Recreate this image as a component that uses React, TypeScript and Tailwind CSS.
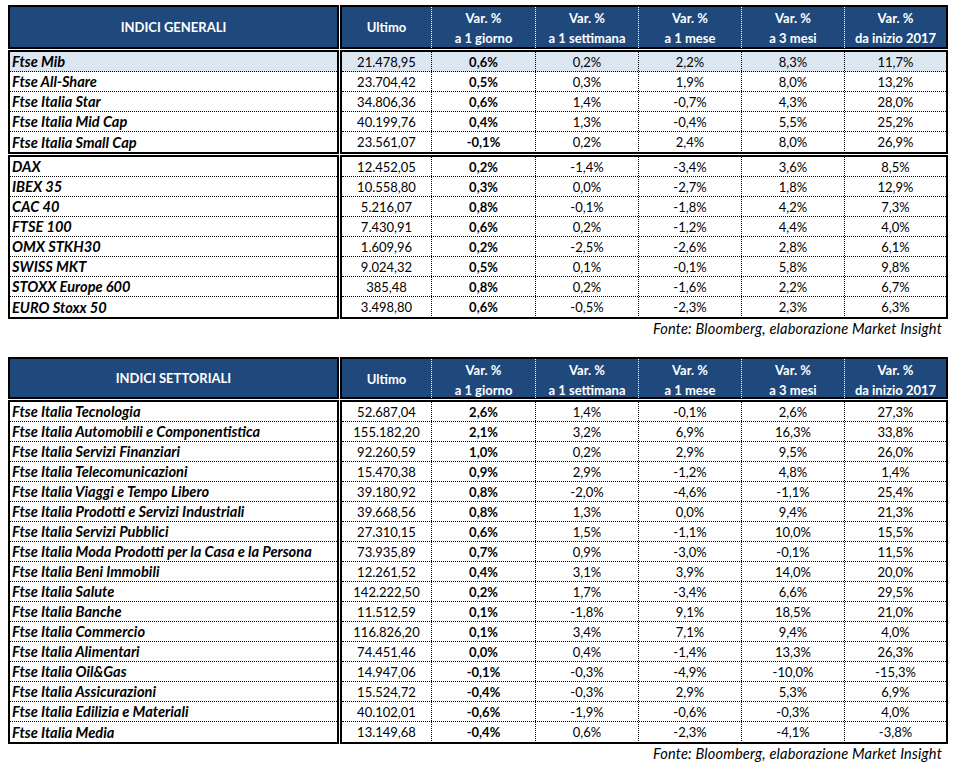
import React from "react";

type Row = [string, string, string, string, string, string, string];

const generali1: Row[] = [
  ["Ftse Mib", "21.478,95", "0,6%", "0,2%", "2,2%", "8,3%", "11,7%"],
  ["Ftse All-Share", "23.704,42", "0,5%", "0,3%", "1,9%", "8,0%", "13,2%"],
  ["Ftse Italia Star", "34.806,36", "0,6%", "1,4%", "-0,7%", "4,3%", "28,0%"],
  ["Ftse Italia Mid Cap", "40.199,76", "0,4%", "1,3%", "-0,4%", "5,5%", "25,2%"],
  ["Ftse Italia Small Cap", "23.561,07", "-0,1%", "0,2%", "2,4%", "8,0%", "26,9%"],
];

const generali2: Row[] = [
  ["DAX", "12.452,05", "0,2%", "-1,4%", "-3,4%", "3,6%", "8,5%"],
  ["IBEX 35", "10.558,80", "0,3%", "0,0%", "-2,7%", "1,8%", "12,9%"],
  ["CAC 40", "5.216,07", "0,8%", "-0,1%", "-1,8%", "4,2%", "7,3%"],
  ["FTSE 100", "7.430,91", "0,6%", "0,2%", "-1,2%", "4,4%", "4,0%"],
  ["OMX STKH30", "1.609,96", "0,2%", "-2,5%", "-2,6%", "2,8%", "6,1%"],
  ["SWISS MKT", "9.024,32", "0,5%", "0,1%", "-0,1%", "5,8%", "9,8%"],
  ["STOXX Europe 600", "385,48", "0,8%", "0,2%", "-1,6%", "2,2%", "6,7%"],
  ["EURO Stoxx 50", "3.498,80", "0,6%", "-0,5%", "-2,3%", "2,3%", "6,3%"],
];

const settoriali: Row[] = [
  ["Ftse Italia Tecnologia", "52.687,04", "2,6%", "1,4%", "-0,1%", "2,6%", "27,3%"],
  ["Ftse Italia Automobili e Componentistica", "155.182,20", "2,1%", "3,2%", "6,9%", "16,3%", "33,8%"],
  ["Ftse Italia Servizi Finanziari", "92.260,59", "1,0%", "0,2%", "2,9%", "9,5%", "26,0%"],
  ["Ftse Italia Telecomunicazioni", "15.470,38", "0,9%", "2,9%", "-1,2%", "4,8%", "1,4%"],
  ["Ftse Italia Viaggi e Tempo Libero", "39.180,92", "0,8%", "-2,0%", "-4,6%", "-1,1%", "25,4%"],
  ["Ftse Italia Prodotti e Servizi Industriali", "39.668,56", "0,8%", "1,3%", "0,0%", "9,4%", "21,3%"],
  ["Ftse Italia Servizi Pubblici", "27.310,15", "0,6%", "1,5%", "-1,1%", "10,0%", "15,5%"],
  ["Ftse Italia Moda Prodotti per la Casa e la Persona", "73.935,89", "0,7%", "0,9%", "-3,0%", "-0,1%", "11,5%"],
  ["Ftse Italia Beni Immobili", "12.261,52", "0,4%", "3,1%", "3,9%", "14,0%", "20,0%"],
  ["Ftse Italia Salute", "142.222,50", "0,2%", "1,7%", "-3,4%", "6,6%", "29,5%"],
  ["Ftse Italia Banche", "11.512,59", "0,1%", "-1,8%", "9,1%", "18,5%", "21,0%"],
  ["Ftse Italia Commercio", "116.826,20", "0,1%", "3,4%", "7,1%", "9,4%", "4,0%"],
  ["Ftse Italia Alimentari", "74.451,46", "0,0%", "0,4%", "-1,4%", "13,3%", "26,3%"],
  ["Ftse Italia Oil&Gas", "14.947,06", "-0,1%", "-0,3%", "-4,9%", "-10,0%", "-15,3%"],
  ["Ftse Italia Assicurazioni", "15.524,72", "-0,4%", "-0,3%", "2,9%", "5,3%", "6,9%"],
  ["Ftse Italia Edilizia e Materiali", "40.102,01", "-0,6%", "-1,9%", "-0,6%", "-0,3%", "4,0%"],
  ["Ftse Italia Media", "13.149,68", "-0,4%", "0,6%", "-2,3%", "-4,1%", "-3,8%"],
];

const GRID = "grid grid-cols-[90px_104px_103px_103px_103px_1fr]";

function Header({ title, tall }: { title: string; tall?: boolean }) {
  const cols: [string, string][] = [
    ["Var. %", "a 1 giorno"],
    ["Var. %", "a 1 settimana"],
    ["Var. %", "a 1 mese"],
    ["Var. %", "a 3 mesi"],
    ["Var. %", "da inizio 2017"],
  ];
  const h = tall ? "h-[44px]" : "h-[42px]";
  return (
    <div className="flex gap-[1px]">
      <div className={`w-[331px] ${h} border-2 border-black bg-[#1f497d] text-white font-bold flex items-center justify-center pt-[1px]`}>
        {title}
      </div>
      <div className={`flex-1 ${h} border-2 border-black bg-[#1f497d] text-white font-bold ${GRID}`}>
        <div className="flex items-center justify-center border-r border-dotted border-white pt-[1px]">Ultimo</div>
        {cols.map((c, i) => (
          <div
            key={i}
            className={`flex flex-col items-center justify-center leading-[20px] pt-[1px] ${i < 4 ? "border-r border-dotted border-white" : ""}`}
          >
            <span>{c[0]}</span>
            <span>{c[1]}</span>
          </div>
        ))}
      </div>
    </div>
  );
}

function Group({ rows, highlightFirst }: { rows: Row[]; highlightFirst?: boolean }) {
  return (
    <div className="flex gap-[1px]">
      <div className="w-[331px] border-2 border-black">
        {rows.map((r, i) => (
          <div
            key={i}
            className={`h-[20px] flex items-center pl-[2px] pt-[1px] font-bold italic text-[14.6px] ${i < rows.length - 1 ? "border-b border-dotted border-black" : ""} ${highlightFirst && i === 0 ? "bg-[#dce6f1]" : ""}`}
          >
            {r[0]}
          </div>
        ))}
      </div>
      <div className="flex-1 border-2 border-black">
        {rows.map((r, i) => (
          <div
            key={i}
            className={`h-[20px] ${GRID} ${i < rows.length - 1 ? "border-b border-dotted border-black" : ""} ${highlightFirst && i === 0 ? "bg-[#dce6f1]" : ""}`}
          >
            {r.slice(1).map((v, j) => (
              <div
                key={j}
                className={`flex items-center justify-center pt-[1px] ${j < 5 ? "border-r border-dotted border-black" : ""} ${j === 1 ? "font-bold" : ""}`}
              >
                {v}
              </div>
            ))}
          </div>
        ))}
      </div>
    </div>
  );
}

function Fonte() {
  return (
    <div className="h-[18px] flex items-center justify-end pr-[6px] pt-[1px] italic text-[14.6px] tracking-[0.18px]">
      Fonte: Bloomberg, elaborazione Market Insight
    </div>
  );
}

export default function App() {
  return (
    <div className="w-[954px] h-[764px] bg-white text-black text-[13px] font-['Lato',sans-serif] pt-[5px] pl-[8px] pr-[6px]">
      <div className="flex flex-col gap-[1px]">
        <Header title="INDICI GENERALI" tall />
        <Group rows={generali1} highlightFirst />
        <Group rows={generali2} />
      </div>
      <Fonte />
      <div className="flex flex-col gap-[1px] mt-[20px]">
        <Header title="INDICI SETTORIALI" />
        <Group rows={settoriali} />
      </div>
      <Fonte />
    </div>
  );
}
